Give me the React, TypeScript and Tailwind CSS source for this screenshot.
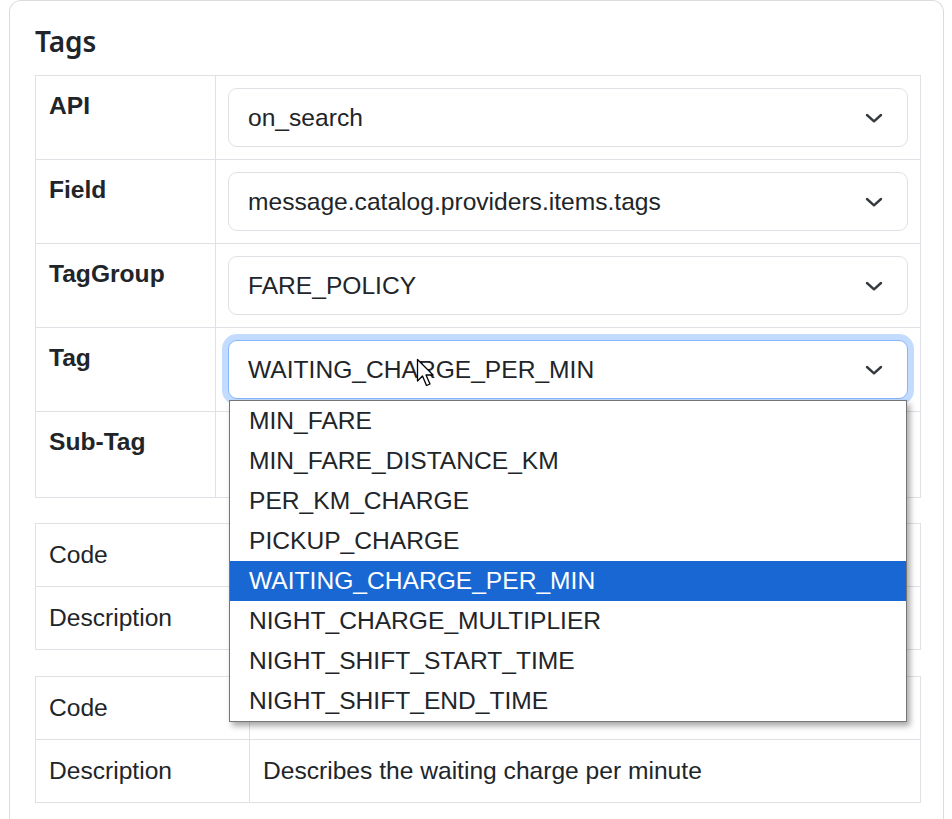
import React from "react";

const Chevron = () => (
  <svg width="18" height="10" viewBox="0 0 18 10" fill="none" className="shrink-0">
    <path d="M2 2l7 6.3 7-6.3" stroke="#343a40" strokeWidth="2.4" strokeLinecap="round" strokeLinejoin="round" />
  </svg>
);

function Select({ value, focused = false, children }: { value: string; focused?: boolean; children?: React.ReactNode }) {
  return (
    <div
      className={
        "relative flex h-[59px] items-center justify-between rounded-[9px] border bg-white pl-[19px] pr-[24px] " +
        (focused
          ? "border-[#86b7fe] shadow-[0_0_0_6px_rgba(13,110,253,0.25)]"
          : "border-[#dee2e6]")
      }
    >
      <span className="whitespace-nowrap">{value}</span>
      <Chevron />
      {children}
    </div>
  );
}

const options = [
  "MIN_FARE",
  "MIN_FARE_DISTANCE_KM",
  "PER_KM_CHARGE",
  "PICKUP_CHARGE",
  "WAITING_CHARGE_PER_MIN",
  "NIGHT_CHARGE_MULTIPLIER",
  "NIGHT_SHIFT_START_TIME",
  "NIGHT_SHIFT_END_TIME",
];

function Cursor() {
  return (
    <svg
      className="absolute left-[187px] top-[17px] z-30"
      width="20"
      height="30"
      viewBox="0 0 20 30"
    >
      <path
        d="M1.5 1.5 L1.5 23 L6.5 18 L10.5 27.5 L14 26 L10 17 L17 17 Z"
        fill="#fff"
        stroke="#000"
        strokeWidth="1.3"
        strokeLinejoin="round"
      />
    </svg>
  );
}

function FormRow({ label, children, first = false }: { label: string; children: React.ReactNode; first?: boolean }) {
  return (
    <div className={"grid grid-cols-[180px_1fr] " + (first ? "" : "border-t border-[#dee2e6]")}>
      <div className="border-r border-[#dee2e6] px-[13px] pt-[12px] font-bold">{label}</div>
      <div className="py-[12px] pl-[12px] pr-[12px]">{children}</div>
    </div>
  );
}

function InfoTable({ code, description }: { code: string; description: string }) {
  return (
    <div className="border border-[#dee2e6]">
      <div className="grid grid-cols-[214px_1fr]">
        <div className="border-r border-[#dee2e6] px-[13px] py-[13px]">Code</div>
        <div className="px-[13px] py-[13px]">{code || "\u00a0"}</div>
      </div>
      <div className="grid grid-cols-[214px_1fr] border-t border-[#dee2e6]">
        <div className="border-r border-[#dee2e6] px-[13px] py-[13px]">Description</div>
        <div className="px-[13px] py-[13px]">{description || "\u00a0"}</div>
      </div>
    </div>
  );
}

export default function App() {
  return (
    <div className="min-h-[819px] bg-white font-['Liberation_Sans',Arial,sans-serif] text-[24.6px] leading-[36px] text-[#212529]">
      <div className="ml-[9px] mr-[8px] h-[840px] rounded-t-[12px] border border-b-0 border-[#dcdcdc] pl-[25px] pr-[22px] pt-[25px]">
        <h4 className="mb-[18px] h-[31px] font-['Noto_Sans',sans-serif] text-[28px] font-semibold leading-[31px] text-[#212529]">
          Tags
        </h4>
        <div className="border border-[#dee2e6]">
          <FormRow label="API" first>
            <Select value="on_search" />
          </FormRow>
          <FormRow label="Field">
            <Select value="message.catalog.providers.items.tags" />
          </FormRow>
          <FormRow label="TagGroup">
            <Select value="FARE_POLICY" />
          </FormRow>
          <FormRow label="Tag">
            <Select value="WAITING_CHARGE_PER_MIN" focused>
              <Cursor />
              <div className="absolute left-0 right-0 top-[59px] z-20 border border-[#767676] bg-white shadow-[3px_4px_6px_rgba(0,0,0,0.35)]">
                {options.map((o) => (
                  <div
                    key={o}
                    className={
                      "h-[40px] whitespace-nowrap pl-[19px] leading-[40px] " +
                      (o === "WAITING_CHARGE_PER_MIN" ? "bg-[#1967d2] text-white" : "text-[#212529]")
                    }
                  >
                    {o}
                  </div>
                ))}
              </div>
            </Select>
          </FormRow>
          <FormRow label="Sub-Tag">
            <div className="h-[61px]" />
          </FormRow>
        </div>

        <div className="mt-[25px]">
          <InfoTable code="" description="" />
        </div>
        <div className="mt-[26px]">
          <InfoTable code="" description="Describes the waiting charge per minute" />
        </div>
      </div>
    </div>
  );
}
